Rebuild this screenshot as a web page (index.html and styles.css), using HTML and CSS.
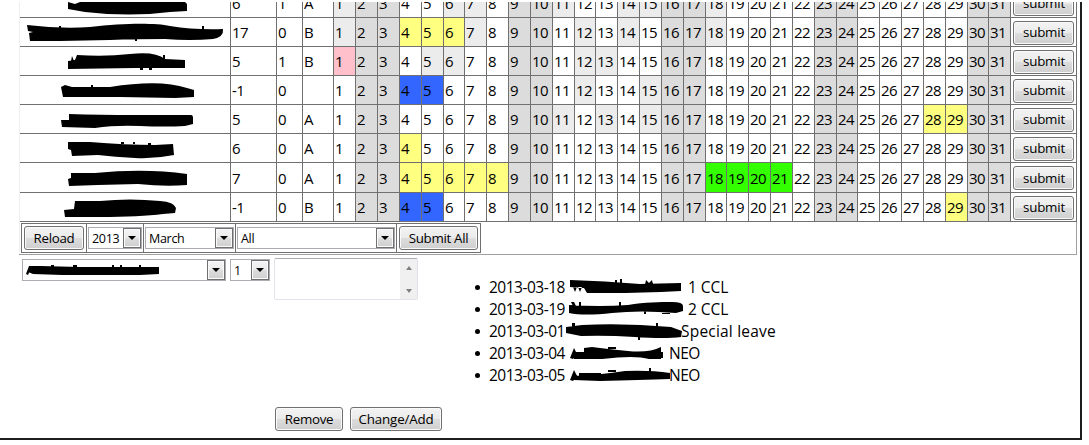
FILE: index.html
```html
<!DOCTYPE html>
<html lang="en">
<head>
<meta charset="utf-8">
<title>Leave planner</title>
<link rel="stylesheet" href="styles.css">
</head>
<body>
<main class="panel">
  <section class="planner">
    <div class="rows" id="rows"></div>
    <form class="toolbar">
      <div class="tool"><button type="button" class="btn reload">Reload</button></div>
      <div class="tool"><div class="pick year"><span>2013</span><i class="arrow"></i></div></div>
      <div class="tool"><div class="pick month"><span>March</span><i class="arrow"></i></div></div>
      <div class="tool"><div class="pick group"><span>All</span><i class="arrow"></i></div></div>
      <div class="tool"><button type="button" class="btn submit-all">Submit All</button></div>
    </form>
  </section>
  <section class="editor">
    <div class="pick person">
      <svg class="ink" width="184" height="20" viewBox="23 260 184 20"><path d="M29 266 L40 266 80 267 112 267 159 267 159 274 140 275 62 275 33 274 28 272Z M26 274L29 266 31 268 28 275Z M51 265h3v3h-3z M73 265h4v3h-4z M112 265h2v3h-2z M120 265h2v3h-2z M139 265h2v3h-2z"/></svg>
      <i class="arrow"></i>
    </div>
    <div class="pick count"><span>1</span><i class="arrow"></i></div>
    <div class="middle">
      <div class="note"><div class="scroll"><i class="up"></i><i class="down"></i></div></div>
      <div class="actions">
        <button type="button" class="btn remove">Remove</button>
        <button type="button" class="btn change">Change/Add</button>
      </div>
    </div>
    <ul class="entries">
      <li><span class="date">2013-03-18</span><svg class="ink" width="116" height="22" viewBox="567 276 116 22"><path d="M570 280Q605 281 640 284L681 283 681 291Q640 293 610 293L587 293 584 288 570 287Z M573 287l2 5 2-5z M578 287l2 5 2-5z M615 280h2v5h-2z M620 279h2v5h-2z M645 285l1-5 3 3 3-3 1 5z"/></svg><span>1 CCL</span></li>
      <li><span class="date">2013-03-19</span><svg class="ink" width="116" height="22" viewBox="567 298 116 22"><path d="M569 305Q600 307 628 305C645 302 660 302 672 302Q683 302 683 306L683 311 676 313Q640 310 612 313T569 313Z M571 302h3l2 4h-3z M579 302h2v4h-2z M619 302h2v4h-2z M644 311h2v3h-2z M662 310h8v4h-8z"/></svg><span>2 CCL</span></li>
      <li><span class="date">2013-03-01</span><svg class="ink third" width="116" height="22" viewBox="567 320 116 22"><path d="M566 327L582 325Q625 323 671 327L682 331 681 337Q665 339 635 337T581 336L566 333Z M572 323h3v4h-3z M656 323h2v4h-2z M638 337h2v3h-2z"/></svg><span class="wide">Special leave</span></li>
      <li><span class="date">2013-03-04</span><svg class="ink" width="98" height="22" viewBox="567 342 98 22"><path d="M584 348L592 347Q607 349 628 351T661 347L661 359 649 359Q635 355 602 359L574 359 573 352 584 352Z M570 358l4-10 3 6-4 5z M608 347h8v2h-8z M661 352h2v6h-2z"/></svg><span class="near">NEO</span></li>
      <li><span class="date">2013-03-05</span><svg class="ink" width="98" height="22" viewBox="567 364 98 22"><path d="M573 376Q600 375 625 371Q650 370 670 373L670 379Q640 380 600 381L574 380Z M570 380l4-10 3 6-4 5z M579 373h22v3h-22z M608 370h8v2h-8z M649 368h2v4h-2z"/></svg><span class="near">NEO</span></li>
    </ul>
  </section>
</main>
<script src="planner.js"></script>
</body>
</html>
```

FILE: styles.css
```css
body {
  margin: 0;
  padding-top: 2px;
  background: #fff;
  color: #000;
  font: 15px/22px "Trebuchet MS", "Open Sans", sans-serif;
  letter-spacing: -0.7px;
}
.panel {
  box-sizing: border-box;
  width: 1082px;
  height: 438px;
  overflow: hidden;
  border-right: 2px solid #1e1e20;
  border-bottom: 2px solid #1e1e20;
}
.planner {
  box-sizing: border-box;
  width: 1058px;
  height: 266px;
  margin: -13px 0 0 19px;
  border: solid #a0a0a0;
  border-width: 0 1px 1px 0;
  box-shadow: inset 1px 0 #eee;
}
.rows { margin-right: -1px; padding-left: 1px; }
.row {
  display: grid;
  grid-template-columns: 211px 46px 26px 31px 22px 22px 22px 22px 22px 21px 22px 22px 22px 22px 22px 21px 22px 22px 22px 22px 22px 21px 22px 22px 22px 22px 22px 21px 22px 22px 22px 22px 22px 21px 22px 66px;
  height: 29px;
}
.row.tall { height: 30px; }
.cell {
  display: flex;
  align-items: center;
  box-sizing: border-box;
  padding: 0 0 0 1px;
  border: solid #707070;
  border-width: 0 1px 1px 0;
  white-space: nowrap;
  min-width: 0;
}
.name { padding: 0; }
.send { padding: 1px 0 0 2px; }
.rest { background: #dcdcdc; }
.soft { background: #ececec; }
.yellow { background: #ffff80; }
.blue { background: #3366ff; }
.green { background: #33ff00; }
.pink { background: #ffc0cb; }
.ink { display: block; flex: none; fill: #000; }
.btn {
  box-sizing: border-box;
  height: 24px;
  padding: 0 0 1px;
  border: 1px solid #707070;
  border-radius: 3px;
  background: linear-gradient(#f3f3f3 0, #ebebeb 48%, #dddddd 50%, #cfcfcf 100%);
  box-shadow: inset 0 0 0 1px #fafafa;
  color: #000;
  font: 13.33px/20px "Trebuchet MS", "Open Sans", sans-serif;
  letter-spacing: -0.3px;
}
.submit { width: 61px; padding-left: 1px; letter-spacing: -0.2px; }
.toolbar {
  display: flex;
  box-sizing: border-box;
  width: 460px;
  height: 30px;
  margin: 1px 0 0 2px;
  border: 1px solid #707070;
}
.tool {
  display: flex;
  align-items: center;
  padding: 0 1px;
  border-right: 1px solid #707070;
}
.tool:first-child { padding: 0 2px; }
.tool:last-child { padding-left: 2px; border-right: 0; }
.reload { width: 60px; }
.submit-all { width: 79px; }
.pick {
  display: flex;
  justify-content: space-between;
  box-sizing: border-box;
  height: 22px;
  border: 1px solid #abadb3;
  font-size: 12.5px;
  line-height: 21px;
  letter-spacing: -0.3px;
}
.pick span { padding-left: 3px; }
.year { width: 54px; }
.month { width: 89px; }
.group { width: 158px; }
.arrow {
  display: flex;
  align-items: center;
  justify-content: center;
  box-sizing: border-box;
  flex: none;
  width: 18px;
  height: 20px;
  border: 1px solid #707070;
  background: linear-gradient(#f3f3f3 0, #ebebeb 48%, #dddddd 50%, #cfcfcf 100%);
  box-shadow: inset 0 0 0 1px #fafafa;
}
.arrow::after {
  content: "";
  border: solid transparent;
  border-width: 4px 4px 0;
  border-top-color: #000;
}
.editor { display: flex; align-items: flex-start; padding: 4px 0 0 22px; }
.person { width: 204px; }
.count { width: 40px; margin-left: 4px; }
.middle { margin: -1px 0 0 4px; }
.note {
  display: flex;
  justify-content: flex-end;
  box-sizing: border-box;
  width: 144px;
  height: 42px;
  border: 1px solid #e0e3ea;
  border-top-color: #abadb3;
  border-radius: 2px;
}
.scroll {
  display: flex;
  flex-direction: column;
  align-items: center;
  justify-content: space-between;
  box-sizing: border-box;
  width: 17px;
  padding: 7px 0 6px;
  background: #f0f0f0;
}
.up, .down { border: solid transparent; border-width: 0 3px 4px; border-bottom-color: #808080; }
.down { border-width: 4px 3px 0; border-top-color: #808080; }
.actions { display: flex; gap: 7px; margin: 107px 0 0 1px; }
.remove { width: 68px; }
.change { width: 92px; letter-spacing: -0.15px; }
.entries { width: 354px; margin: 17px 0 0 7px; padding: 0 0 0 26px; list-style: none; }
.entries li { display: flex; align-items: flex-start; height: 22px; font-size: 15.5px; line-height: 22px; white-space: nowrap; letter-spacing: -0.05px; }
.entries li::before {
  content: "";
  width: 5px;
  height: 5px;
  margin: 9px 9px 0 0;
  border-radius: 50%;
  background: #000;
}
.date { width: 78px; letter-spacing: -0.5px; }
.entries .ink { overflow: visible; margin-right: 5px; }
.entries .third { margin-right: -2px; }
.wide { letter-spacing: 0.2px; }
.near { margin-left: -1px; letter-spacing: -0.5px; }
```

FILE: planner.js
```js
const REST = [2, 3, 9, 10, 16, 17, 23, 24, 30, 31];
const STAFF = [
  { top: -11, left: "6", used: "1", team: "A", marks: { soft: [1, 6, 7, 11, 14, 15, 18] },
    ink: "M68 2L75 4 80 2 185 2 187 4 187 11 170 12Q130 17 85 12L68 9Z" },
  { top: 18, left: "17", used: "0", team: "B", marks: { soft: [1, 7, 12, 14, 18], yellow: [4, 5, 6] },
    ink: "M27 25Q60 29 90 27C125 23 155 23 170 26Q195 30 223 29Q224 37 213 39Q190 41 165 39Q135 39 110 40L60 41 30 41 29 33 33 32 28 31Z M59 26h2v3h-2z M202 26h2v4h-2z M135 39h2v2h-2z" },
  { top: 47, left: "5", used: "1", team: "B", marks: { pink: [1], soft: [5, 6, 12, 13] },
    ink: "M68 61L75 60 77 55Q105 57 130 54T165 59L185 60 185 68 135 68 68 69Z M71 61l1-5 2 5z M163 55h2v4h-2z M140 68h3v2h-3z M149 68h3v2h-3z" },
  { top: 76, left: "-1", used: "0", team: "", marks: { soft: [12, 15], blue: [4, 5] },
    ink: "M61 87L65 85 72 87 110 87Q160 79 187 88L194 90 194 97 175 98 120 97 63 97Z M91 85h2v3h-2z" },
  { top: 105, left: "5", used: "0", team: "A", marks: { soft: [11, 13, 15], yellow: [28, 29] },
    ink: "M61 120L69 120 69 114Q100 115 135 115T191 115Q193 115 193 118L193 124 185 126Q165 127 140 126T95 128L62 127Z" },
  { top: 134, left: "6", used: "0", team: "A", marks: { yellow: [4] },
    ink: "M68 142L90 142Q125 145 155 145L173 144 174 155Q155 159 135 158T98 155L72 156 71 150 68 149Z M121 142h3v2h-3z M133 142h2v2h-2z M148 143h3v2h-3z" },
  { top: 163, tall: true, left: "7", used: "0", team: "A", marks: { yellow: [4, 5, 6, 7, 8], green: [18, 19, 20, 21] },
    ink: "M68 178L71 177 71 172 95 172Q145 167 187 173L187 184Q165 186 138 183L98 184 69 185Z" },
  { top: 193, left: "-1", used: "0", team: "B", marks: { blue: [4, 5], yellow: [29] },
    ink: "M64 210L74 209 75 201 100 201Q130 198 160 201Q174 202 176 208L175 213 163 214Q140 217 100 217L65 217Z" }
];

function markOf(person, day) {
  const hit = Object.keys(person.marks).find(k => person.marks[k].includes(day));
  return hit || (REST.includes(day) ? "rest" : "");
}

document.getElementById("rows").innerHTML = STAFF.map(p => {
  let days = "";
  for (let d = 1; d <= 31; d++) {
    days += `<div class="cell ${markOf(p, d)}">${d}</div>`;
  }
  return `<div class="row${p.tall ? " tall" : ""}">
    <div class="cell name"><svg class="ink" width="210" height="28" viewBox="20 ${p.top} 210 28"><path d="${p.ink}"/></svg></div>
    <div class="cell">${p.left}</div><div class="cell">${p.used}</div><div class="cell">${p.team}</div>
    ${days}<div class="cell send"><button type="button" class="btn submit">submit</button></div></div>`;
}).join("");
```
